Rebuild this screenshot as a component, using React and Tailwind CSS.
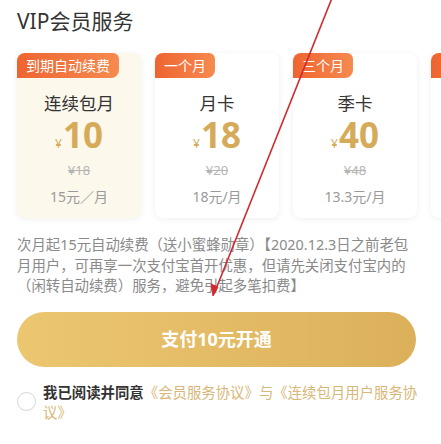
import React from 'react';

const plans = [
  { tag: '到期自动续费', name: '连续包月', price: '10', old: '¥18', unit: '15元／月', active: true },
  { tag: '一个月', name: '月卡', price: '18', old: '¥20', unit: '18元/月' },
  { tag: '三个月', name: '季卡', price: '40', old: '¥48', unit: '13.3元/月' },
];

const PlanCard = ({ plan }) => (
  <div
    className={
      'relative shrink-0 w-[124px] h-[165px] rounded-lg flex flex-col items-center shadow-[0_1px_6px_rgba(0,0,0,0.07)] ' +
      (plan.active ? 'bg-[#fdf8ec]' : 'bg-white')
    }
  >
    <div className="self-start h-[25px] px-[9px] flex items-center rounded-tl-lg rounded-tr-md rounded-br-lg bg-gradient-to-r from-[#ee6430] to-[#f68a4f] text-white text-[14px] leading-none">
      {plan.tag}
    </div>
    <div className="mt-[15px] text-[17.5px] leading-[20px] text-[#333]">{plan.name}</div>
    <div className="mt-[4px] flex items-baseline text-[#d5ab5a] leading-none">
      <span className="text-[12px] mr-[1px]">¥</span>
      <span className="text-[35px] font-bold">{plan.price}</span>
    </div>
    <div className="mt-[10px] text-[13px] leading-[16px] text-[#b5b5b5] line-through">{plan.old}</div>
    <div className="mt-[11px] text-[14px] leading-[16px] text-[#9a9a9a]">{plan.unit}</div>
  </div>
);

export default function App() {
  return (
    <div
      className="relative w-[441px] h-[444px] overflow-hidden bg-white"
      style={{ fontFamily: '"Noto Sans", "Noto Sans CJK SC", sans-serif' }}
    >
      <h1 className="pl-[17px] pt-[6px] text-[21px] leading-[30px] text-[#333]">VIP会员服务</h1>

      <div className="mt-[17px] flex gap-[14px] pl-[17px]">
        {plans.map((p) => (
          <PlanCard key={p.name} plan={p} />
        ))}
        {/* next card, only its edge is visible */}
        <div className="shrink-0 w-[124px] h-[165px] rounded-lg bg-white shadow-[0_1px_6px_rgba(0,0,0,0.07)]">
          <div className="h-[25px] w-[70px] rounded-tl-lg rounded-br-lg bg-gradient-to-r from-[#ee6430] to-[#f68a4f]" />
        </div>
      </div>

      <p className="mt-[17px] px-[17px] text-[14.4px] leading-[20.5px] text-[#8a8a8a] whitespace-nowrap">
        次月起15元自动续费（送小蜜蜂勋章）【2020.12.3日之前老包
        <br />
        月用户，可再享一次支付宝首开优惠，但请先关闭支付宝内的
        <br />
        （闲转自动续费）服务，避免引起多笔扣费】
      </p>

      <div className="mx-[17px] mt-[15px] h-[55px] w-[399px] rounded-full bg-gradient-to-r from-[#ecc770] to-[#dcb05a] flex items-center justify-center">
        <span className="text-white text-[18px] font-bold">支付10元开通</span>
      </div>

      <div className="mt-[16px] flex pl-[17px]">
        <div className="mt-[9px] w-[19px] h-[19px] rounded-full border border-[#d6d6d6] shrink-0" />
        <p className="ml-[7px] text-[14.4px] leading-[20px] text-[#d8b878] whitespace-nowrap">
          <span className="font-bold text-[#333]">我已阅读并同意</span>
          《会员服务协议》与《连续包月用户服务协
          <br />
          议》
        </p>
      </div>

      <svg className="absolute left-0 top-0 pointer-events-none" width="441" height="444" viewBox="0 0 441 444">
        <line x1="332" y1="-2" x2="214" y2="294" stroke="#cf2a2f" strokeWidth="1.6" />
        <path d="M213 296 L211 284 L218 287 Z" fill="#cf2a2f" stroke="#cf2a2f" strokeWidth="1" />
      </svg>
    </div>
  );
}
